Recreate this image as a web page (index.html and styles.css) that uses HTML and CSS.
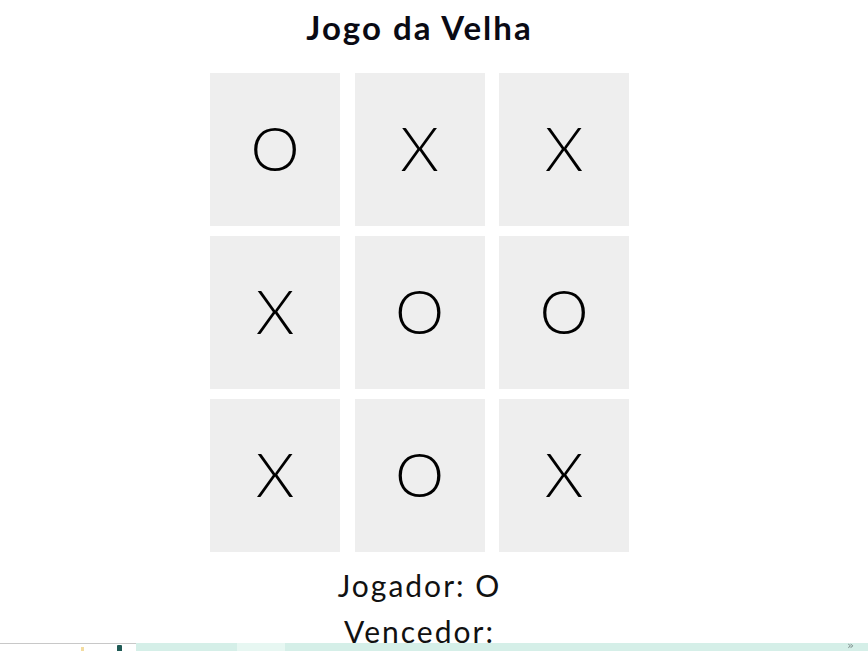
FILE: index.html
```html
<!DOCTYPE html>
<html lang="pt">
<head>
<meta charset="utf-8">
<title>Jogo da Velha</title>
<link rel="stylesheet" href="styles.css">
</head>
<body>
<main class="page">
  <h1 class="title">Jogo da Velha</h1>
  <div class="board">
    <div class="cell">O</div>
    <div class="cell">X</div>
    <div class="cell">X</div>
    <div class="cell">X</div>
    <div class="cell">O</div>
    <div class="cell">O</div>
    <div class="cell">X</div>
    <div class="cell">O</div>
    <div class="cell">X</div>
  </div>
  <p class="status">Jogador: O</p>
  <p class="status">Vencedor:</p>
</main>
<div class="taskbar">
  <div class="tb-left">
    <span class="tb-dot tb-yellow"></span>
    <span class="tb-dot tb-teal"></span>
  </div>
  <div class="tb-right">
    <span class="tb-seg"></span>
    <span class="tb-more">»</span>
  </div>
</div>
</body>
</html>
```
FILE: styles.css
```css
html, body {
  margin: 0;
  padding: 0;
  background: #ffffff;
}
body {
  font-family: "Lato", "DejaVu Sans", sans-serif;
  color: #000;
  overflow: hidden;
}
.page {
  width: 839px;
  display: flex;
  flex-direction: column;
  align-items: center;
}
.title {
  margin: 7px 0 0 0;
  font-size: 33px;
  line-height: 40px;
  font-weight: 700;
  letter-spacing: 2px;
  color: #0a0a14;
}
.board {
  margin-top: 26px;
  display: grid;
  grid-template-columns: repeat(3, 130px);
  grid-auto-rows: 153px;
  column-gap: 14.5px;
  row-gap: 10px;
}
.cell {
  background: #eeeeee;
  display: flex;
  align-items: center;
  justify-content: center;
  padding-bottom: 6px;
  box-sizing: border-box;
  font-size: 62px;
  font-weight: 300;
  line-height: 1;
  color: #000;
}
.status {
  margin: 0;
  font-size: 30px;
  line-height: 46px;
  font-weight: 400;
  letter-spacing: 2px;
  color: #111;
}
.board + .status {
  margin-top: 10px;
}
.taskbar {
  position: fixed;
  left: 0;
  right: 0;
  bottom: 0;
  height: 8px;
  display: flex;
}
.tb-left {
  width: 136px;
  background: #fff;
  border-top: 1px solid #c8c8c8;
  box-sizing: border-box;
  position: relative;
}
.tb-dot {
  position: absolute;
  top: 3px;
  width: 5px;
  height: 5px;
}
.tb-yellow { left: 81px; background: #f3dca0; width: 3px; }
.tb-teal { left: 117px; top: 1px; height: 7px; background: #1f5a55; border-radius: 1px; }
.tb-right {
  flex: 1;
  background: #d5efe8;
  position: relative;
}
.tb-seg {
  position: absolute;
  left: 101px;
  width: 48px;
  top: 0;
  bottom: 0;
  background: #e7f7f2;
}
.tb-more {
  position: absolute;
  right: 14px;
  top: -3px;
  font-size: 11px;
  line-height: 11px;
  color: #7a8a88;
  font-family: "DejaVu Sans", sans-serif;
}
```
